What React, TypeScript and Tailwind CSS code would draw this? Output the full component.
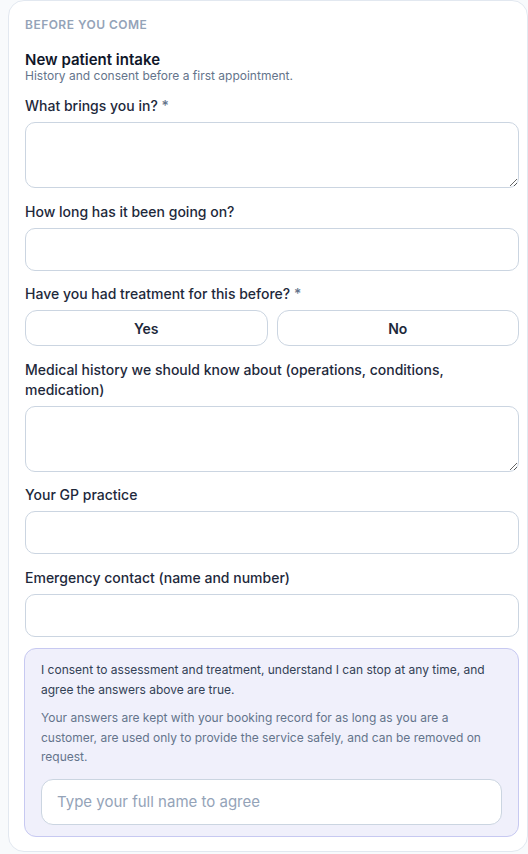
import React from "react";

const font = { fontFamily: "Inter, 'Noto Sans', sans-serif" };

function Label({ children, req }: { children: React.ReactNode; req?: boolean }) {
  return (
    <div className="text-[14px] leading-[20px] font-medium text-[#1e293b]">
      {children}
      {req && <span className="text-[#64748b]"> *</span>}
    </div>
  );
}

function TextArea() {
  return (
    <textarea className="block w-full h-[66px] rounded-[10px] border border-[#cbd5e1] bg-white outline-none px-3 py-2 text-[14px]" />
  );
}

function Input() {
  return (
    <input className="block w-full h-[43px] rounded-[10px] border border-[#cbd5e1] bg-white outline-none px-3 text-[14px]" />
  );
}

export default function App() {
  return (
    <div className="w-[528px] h-[854px] overflow-hidden bg-[#f8fafc] pl-2" style={font}>
      <div className="w-[520px] rounded-2xl border border-[#e2e8f0] bg-white pl-4 pr-2 pt-4 pb-[14px]">
        <div className="text-[12px] leading-4 font-semibold tracking-[0.04em] text-[#94a3b8] uppercase">
          Before you come
        </div>
        <div className="mt-[18px]">
          <div className="text-[15px] leading-[18px] font-semibold text-[#0f172a]">New patient intake</div>
          <div className="text-[12px] leading-4 text-[#64748b] -mt-[1px]">
            History and consent before a first appointment.
          </div>
        </div>
        <div className="mt-[12px] flex flex-col gap-[13.5px]">
          <div className="flex flex-col gap-1.5">
            <Label req>What brings you in?</Label>
            <TextArea />
          </div>
          <div className="flex flex-col gap-1.5">
            <Label>How long has it been going on?</Label>
            <Input />
          </div>
          <div className="flex flex-col gap-1.5">
            <Label req>Have you had treatment for this before?</Label>
            <div className="grid grid-cols-2 gap-[9px]">
              <button className="h-[36px] rounded-xl border border-[#cbd5e1] bg-white text-[14px] font-semibold text-[#1e293b]">
                Yes
              </button>
              <button className="h-[36px] rounded-xl border border-[#cbd5e1] bg-white text-[14px] font-semibold text-[#1e293b]">
                No
              </button>
            </div>
          </div>
          <div className="flex flex-col gap-1.5">
            <Label>Medical history we should know about (operations, conditions, medication)</Label>
            <TextArea />
          </div>
          <div className="flex flex-col gap-1.5">
            <Label>Your GP practice</Label>
            <Input />
          </div>
          <div className="flex flex-col gap-1.5">
            <Label>Emergency contact (name and number)</Label>
            <Input />
          </div>
          <div className="-mt-[2px] -ml-px rounded-xl border border-[#c7c9f1] bg-[#f0f0fb] px-4 py-[11px]">
            <p className="text-[12px] leading-[20px] text-[#334155]">
              I consent to assessment and treatment, understand I can stop at any time, and agree the answers above are true.
            </p>
            <p className="mt-2 text-[12px] leading-[19.5px] text-[#64748b]">
              Your answers are kept with your booking record for as long as you are a customer, are used only to provide the service safely, and can be removed on request.
            </p>
            <input
              placeholder="Type your full name to agree"
              className="mt-3 block w-full h-[46px] rounded-xl border border-[#cbd5e1] bg-white outline-none px-[15px] text-[15px] text-[#1e293b] placeholder:text-[#94a3b8]"
            />
          </div>
        </div>
      </div>
    </div>
  );
}
